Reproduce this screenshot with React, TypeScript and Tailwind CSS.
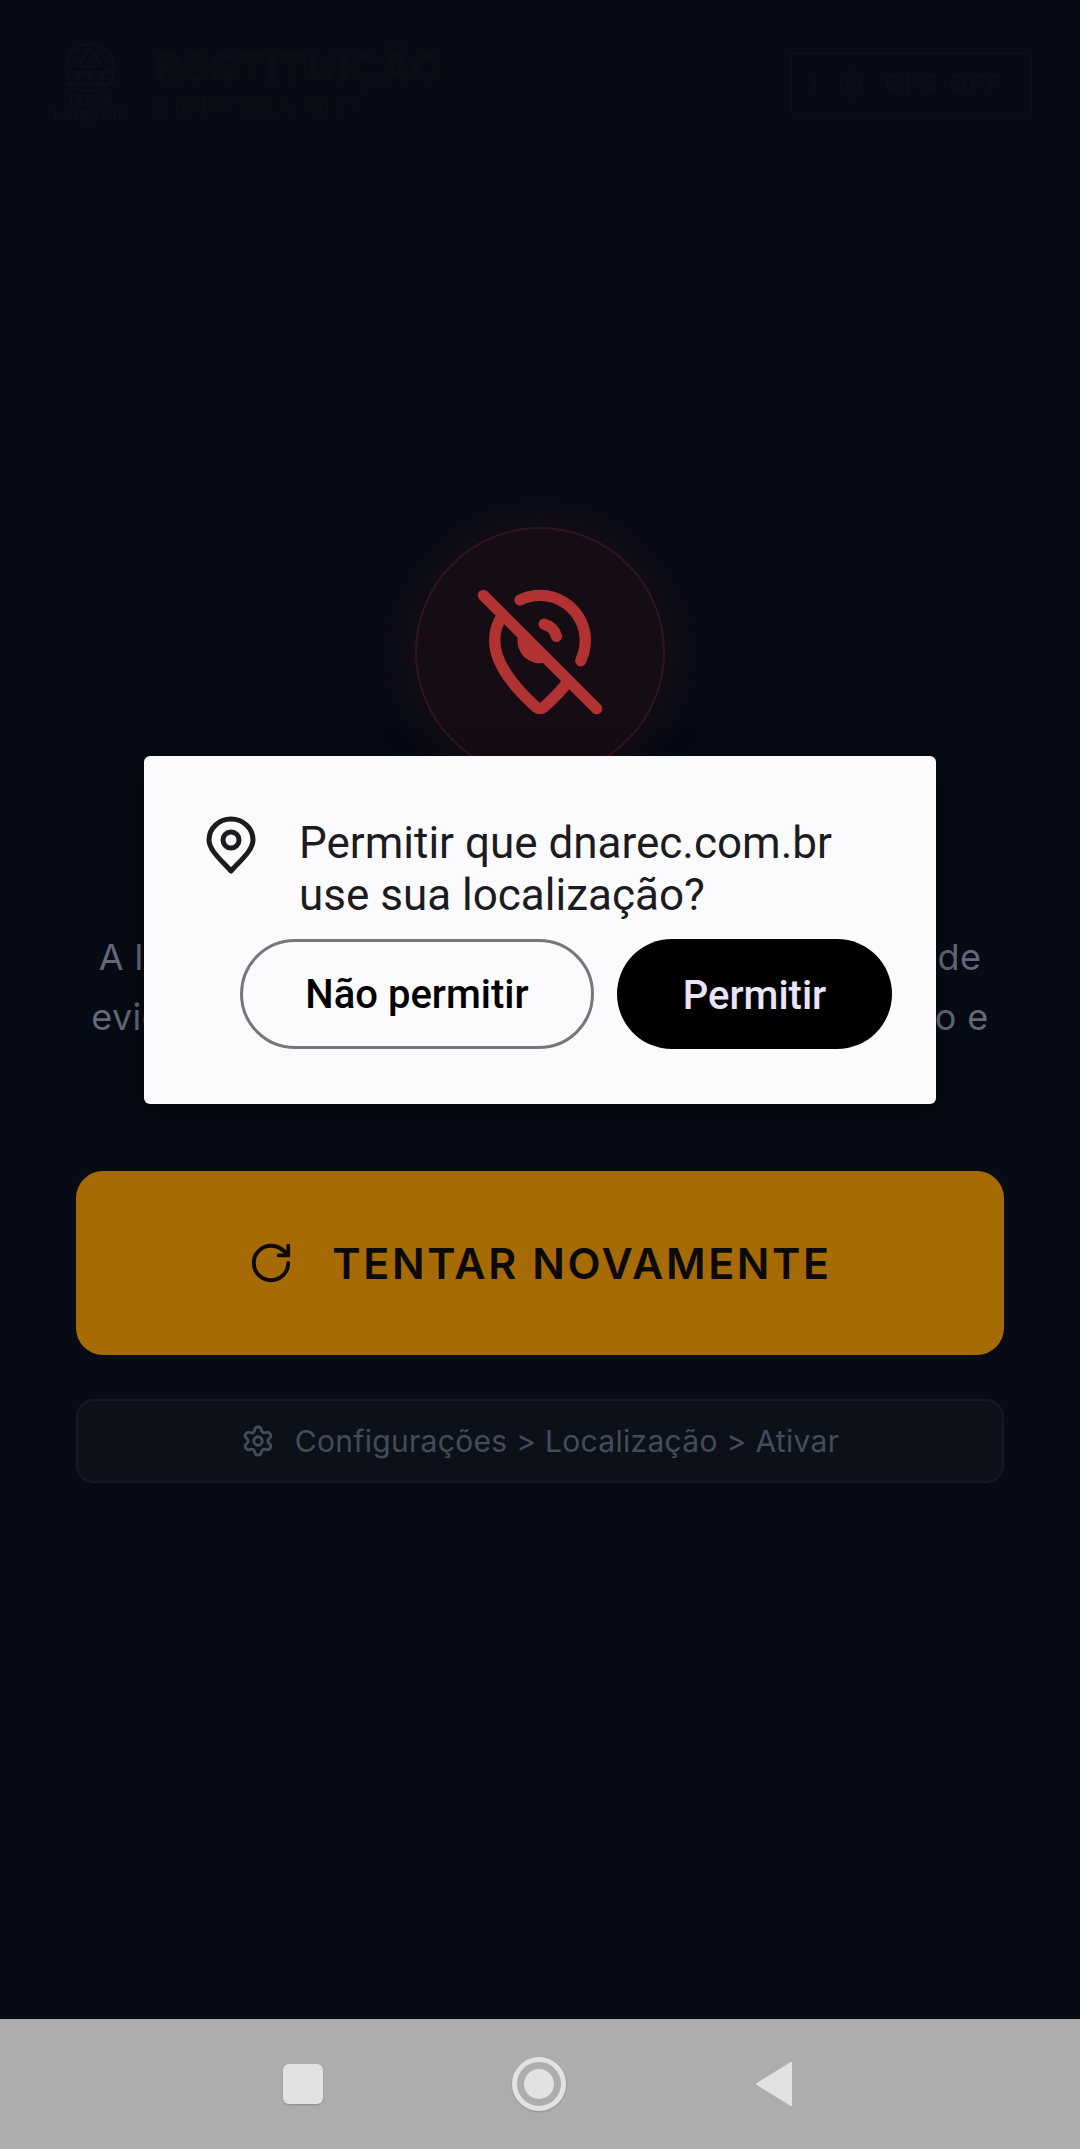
import { MapPinOff, RotateCw, Settings, MapPin } from 'lucide-react';

const inter = 'font-["Inter",sans-serif]';
const roboto = 'font-["Roboto",sans-serif]';

function Logo() {
  return (
    <div className="flex w-[84px] flex-col items-center">
      <svg width="64" height="50" viewBox="0 0 64 50" fill="none" stroke="#0a0f18" strokeWidth="3">
        <circle cx="32" cy="26" r="24" />
        <path d="M32 6 20 24h24Z" />
        <path d="M8 30h48M8 42h48M20 30v12M32 30v12M44 30v12" />
      </svg>
      <span className="text-[14px] leading-[16px] font-bold text-[#0a0f18]">TERRA</span>
      <span className="text-[14px] leading-[16px] font-bold text-[#0a0f18]">HANDLING</span>
    </div>
  );
}

export default function App() {
  return (
    <div className={`relative flex h-[2149px] w-[1080px] flex-col overflow-hidden bg-[#060b15] ${inter}`}>
      <main className="flex flex-1 flex-col px-[76px]">
        {/* Header */}
        <header className="-mx-[28px] flex h-[160px] items-start justify-between pt-[42px]">
          <div className="flex items-start gap-[23px]">
            <Logo />
            <div className="flex flex-col">
              <span className="text-[41px] leading-[50px] font-black tracking-[0.015em] text-[#0a0d13]">RESTITUIÇÃO</span>
              <span className="text-[26px] leading-[28px] font-medium tracking-[0.1em] text-[#0a0d13]">EMPRESA MEI</span>
            </div>
          </div>
          <div className="mt-[10px] flex h-[63px] w-[242px] items-center rounded-[4px] border-2 border-[#0a0e17] pl-[20px] text-[#0b0e16]">
            <span className="h-[20px] w-[3px] bg-[#0b0e16]" />
            <MapPin size={30} strokeWidth={2} className="ml-[21px]" />
            <span className="ml-[18px] text-[24px] font-semibold tracking-[0.1em]">GPS OFF</span>
          </div>
        </header>

        {/* Icon */}
        <div className="mt-[367px] flex justify-center">
          <div className="flex h-[250px] w-[250px] items-center justify-center rounded-full border-2 border-[#301620] bg-[#150c14] shadow-[0_0_60px_rgba(170,40,50,0.16)]">
            <MapPinOff size={136} strokeWidth={2} className="text-[#b13232]" />
          </div>
        </div>

        {/* Message */}
        <p className="-mx-[76px] mt-[150px] whitespace-nowrap text-center text-[36px] leading-[60px] tracking-[0.01em] text-[#646a77]">
          A localização é obrigatória para a coleta segura de
          <br />
          evidências, garantindo a segurança do reembolso e
        </p>

        {/* Retry */}
        <button className="mt-[124px] flex h-[184px] w-full items-center justify-center gap-[38px] rounded-[27px] bg-[#a66b05] text-[#0c0a07]">
          <RotateCw size={46} strokeWidth={2} />
          <span className="text-[43px] font-semibold tracking-[0.06em]">TENTAR NOVAMENTE</span>
        </button>

        {/* Settings hint */}
        <div className="mt-[44px] flex h-[84px] items-center justify-center gap-[20px] rounded-[18px] border-2 border-[#141923] bg-[#0c1119] text-[#444c5c]">
          <Settings size={34} strokeWidth={2} />
          <span className="text-[30px] tracking-[0.01em]">Configurações &gt; Localização &gt; Ativar</span>
        </div>
      </main>

      {/* Android nav bar */}
      <nav className="flex h-[130px] items-center justify-center bg-[#adadad] pr-[4px]">
        <div className="flex items-center gap-[189px]">
          <div className="h-[40px] w-[40px] rounded-[6px] bg-[#e2e2e2] shadow-[0_1px_2px_rgba(0,0,0,0.2)]" />
          <div className="flex h-[54px] w-[54px] items-center justify-center rounded-full border-[5px] border-[#e2e2e2] shadow-[0_1px_2px_rgba(0,0,0,0.2)]">
            <div className="h-[30px] w-[30px] rounded-full bg-[#e2e2e2]" />
          </div>
          <svg width="38" height="48" viewBox="0 0 38 48">
            <path d="M36 3 2 24l34 21Z" fill="#e2e2e2" stroke="#e2e2e2" strokeWidth="2" strokeLinejoin="round" />
          </svg>
        </div>
      </nav>

      {/* Permission dialog */}
      <div className={`absolute left-[144px] top-[756px] h-[348px] w-[792px] rounded-[6px] bg-[#fbfbfe] ${roboto} shadow-[0_10px_40px_rgba(0,0,0,0.3)]`}>
        <div className="flex items-start pl-[60px] pt-[61px]">
          <svg width="54" height="58" viewBox="0 0 54 58" fill="none" stroke="#1c1b1f" strokeWidth="5" className="-mt-[1px]">
            <path d="M27 55C17 44 5 34 5 24a22 21 0 0 1 44 0c0 10-12 20-22 31Z" strokeLinejoin="round" />
            <circle cx="27" cy="24" r="8" />
          </svg>
          <p className="ml-[41px] text-[44px] leading-[52px] text-[#1c1b1f]">
            Permitir que dnarec.com.br
            <br />
            use sua localização?
          </p>
        </div>
        <div className="absolute left-[96px] top-[183px] flex gap-[23px]">
          <button className="flex h-[110px] w-[354px] items-center justify-center rounded-full border-[3px] border-[#79747e] pt-[2px] text-[40px] font-medium text-black">
            Não permitir
          </button>
          <button className="flex h-[110px] w-[275px] items-center justify-center rounded-full bg-black pt-[3px] text-[40px] font-medium text-[#e8e4fa]">
            Permitir
          </button>
        </div>
      </div>
    </div>
  );
}
